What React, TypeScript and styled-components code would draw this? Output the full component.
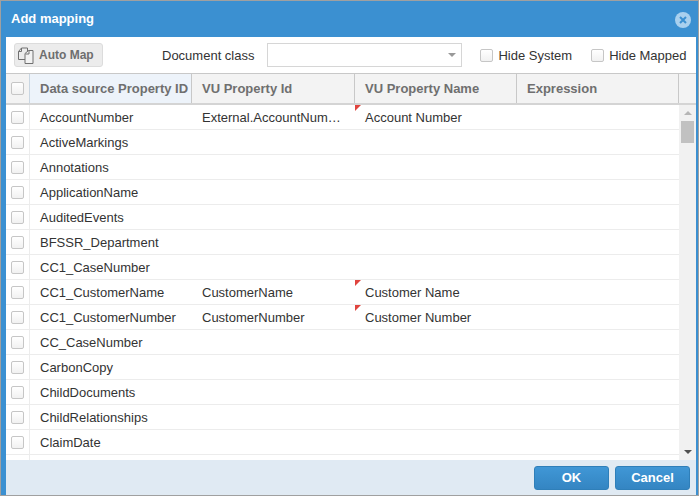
import React from "react";
import styled, { createGlobalStyle } from "styled-components";

const Global = createGlobalStyle`
  html, body { margin: 0; padding: 0; background: #fff; }
  body { font-family: "Liberation Sans", Arial, sans-serif; }
`;

const Dialog = styled.div`
  width: 699px; height: 496px; box-sizing: border-box;
  border: 1px solid #a0a0a0;
  background: #3b90d1; display: flex; flex-direction: column; overflow: hidden;
`;
const TitleBar = styled.div`
  height: 36px; flex: none; display: flex; align-items: center; justify-content: space-between;
  padding: 0 7px 0 10px; color: #fff; font-size: 13px; font-weight: 700;
`;
const TitleText = styled.span`position: relative; top: -1px;`;
const CloseButton = styled.div`
  width: 16px; height: 16px; display: flex; position: relative; top: 1px;
`;
const Body = styled.div`
  flex: 1; min-height: 0; margin: 0 2px 0 5px; background: #fff; display: flex; flex-direction: column;
`;
const Toolbar = styled.div`
  height: 36px; flex: none; box-sizing: border-box; display: flex; align-items: center;
  padding: 0 0 0 8px; color: #333; font-size: 13px;
`;
const AutoMap = styled.div`
  width: 89px; height: 24px; box-sizing: border-box; border: 1px solid #dcdcdc; border-radius: 3px;
  background: #ececec; display: flex; align-items: center; padding-left: 3px; gap: 4px;
  color: #6e6e6e; font-size: 12px; font-weight: 700; margin-right: 59px;
`;
const ClassLabel = styled.span`margin-right: 13px;`;
const Select = styled.div`
  width: 195px; height: 24px; box-sizing: border-box; border: 1px solid #d6d6d6; background: #fff;
  display: flex; align-items: center; justify-content: flex-end; padding-right: 5px; margin-right: 18px;
`;
const Caret = styled.span<{ $up?: boolean; $color?: string }>`
  width: 0; height: 0; border-left: 4px solid transparent; border-right: 4px solid transparent;
  ${p => p.$up
    ? `border-bottom: 4px solid ${p.$color || "#999"};`
    : `border-top: 4px solid ${p.$color || "#999"};`}
`;
const Check = styled.span`
  width: 13px; height: 13px; flex: none; box-sizing: border-box; display: block;
  border: 1px solid #c6c6c6; border-radius: 2px; background: linear-gradient(#fff, #f1f1f1);
`;
const CheckLabel = styled.label<{ $gap: number }>`
  display: flex; align-items: center; gap: 5px; margin-right: ${p => p.$gap}px; white-space: nowrap;
`;
const Header = styled.div`
  height: 32px; flex: none; box-sizing: border-box; display: flex; background: #f3f3f3;
  border-top: 1px solid #c8c8c8; border-bottom: 2px solid #d4d4d4;
`;
const HeadCheck = styled.div`
  width: 24px; box-sizing: border-box; display: flex; align-items: center; justify-content: center;
  border-right: 1px solid #c9d6e2;
`;
const HeadCell = styled.div<{ $w: number; $active?: boolean }>`
  width: ${p => p.$w}px; box-sizing: border-box; border-right: 1px solid #c8c8c8;
  display: flex; align-items: center; padding-left: 10px;
  font-size: 13px; font-weight: 700; color: #6f6f6f; white-space: nowrap; overflow: hidden;
  background: ${p => (p.$active ? "#edf3fa" : "transparent")};
`;
const Content = styled.div`flex: 1; min-height: 0; display: flex; overflow: hidden;`;
const Rows = styled.div`flex: 1; min-width: 0; overflow: hidden;`;
const Row = styled.div`
  height: 25px; box-sizing: border-box; display: flex; border-bottom: 1px solid #ececec;
  font-size: 13px; color: #333;
`;
const RowCheck = styled.div`
  width: 24px; box-sizing: border-box; display: flex; align-items: center; justify-content: center;
  border-right: 1px solid #ececec;
`;
const Cell = styled.div<{ $w: number; $flag?: boolean }>`
  width: ${p => p.$w}px; flex: none; box-sizing: border-box; position: relative;
  padding-left: 10px; line-height: 26px; white-space: nowrap; overflow: hidden;
  &::before {
    content: ""; display: ${p => (p.$flag ? "block" : "none")};
    position: absolute; left: 0; top: 0; width: 6px; height: 6px;
    background: #e0443e; clip-path: polygon(0 0, 100% 0, 0 100%);
  }
`;
const Ellipsis = styled.span`display: block; width: 139px; overflow: hidden; text-overflow: ellipsis;`;
const Scrollbar = styled.div`
  width: 17px; flex: none; background: #f1f1f1; display: flex; flex-direction: column;
  align-items: center;
`;
const ScrollUp = styled.div`height: 16px; display: flex; align-items: center; justify-content: center;`;
const Thumb = styled.div`width: 13px; height: 22px; background: #c1c1c1;`;
const ScrollSpacer = styled.div`flex: 1;`;
const ScrollDown = styled.div`height: 17px; display: flex; align-items: center; justify-content: center;`;
const Footer = styled.div`
  height: 35px; flex: none; background: #e0eaf3; display: flex; align-items: center; justify-content: flex-end;
  gap: 6px; padding-right: 6px;
`;
const Btn = styled.div`
  width: 75px; height: 24px; box-sizing: border-box; border: 1px solid #2f7fb9; border-radius: 3px;
  background: linear-gradient(#4097d6, #3485c2); color: #fff; font-size: 13px; font-weight: 700;
  display: flex; align-items: center; justify-content: center;
`;

const cols = [162, 163, 162, 162];
const data: [string, string?, string?][] = [
  ["AccountNumber", "External.AccountNumber", "Account Number"],
  ["ActiveMarkings"], ["Annotations"], ["ApplicationName"], ["AuditedEvents"],
  ["BFSSR_Department"], ["CC1_CaseNumber"],
  ["CC1_CustomerName", "CustomerName", "Customer Name"],
  ["CC1_CustomerNumber", "CustomerNumber", "Customer Number"],
  ["CC_CaseNumber"], ["CarbonCopy"], ["ChildDocuments"], ["ChildRelationships"], ["ClaimDate"], [""],
];

export default function App() {
  return (
    <>
      <Global />
      <Dialog>
        <TitleBar>
          <TitleText>Add mapping</TitleText>
          <CloseButton>
            <svg width="16" height="16" viewBox="0 0 16 16">
              <circle cx="8" cy="8" r="8" fill="#a9d0ee" />
              <path d="M5 5l6 6M11 5l-6 6" stroke="#3b90d1" strokeWidth="2" />
            </svg>
          </CloseButton>
        </TitleBar>
        <Body>
          <Toolbar>
            <AutoMap>
              <svg width="17" height="17" viewBox="0 0 17 17" fill="none" stroke="#707070" strokeWidth="1">
                <path d="M7.500 12.500h-7v-8l3-3.500h6v4" />
                <path d="M.5 4.500h3v-3.500" />
                <path d="M10.500 3.500h4.500v13h-8v-10z" fill="#f2f2f2" />
                <path d="M7.500 7h3.500v-3.500" />
              </svg>
              Auto Map
            </AutoMap>
            <ClassLabel>Document class</ClassLabel>
            <Select><Caret /></Select>
            <CheckLabel $gap={19}><Check />Hide System</CheckLabel>
            <CheckLabel $gap={0}><Check />Hide Mapped</CheckLabel>
          </Toolbar>
          <Header>
            <HeadCheck><Check /></HeadCheck>
            <HeadCell $w={cols[0]} $active>Data source Property ID</HeadCell>
            <HeadCell $w={cols[1]}>VU Property Id</HeadCell>
            <HeadCell $w={cols[2]}>VU Property Name</HeadCell>
            <HeadCell $w={cols[3]}>Expression</HeadCell>
          </Header>
          <Content>
            <Rows>
              {data.map((r, i) => (
                <Row key={i}>
                  <RowCheck>{r[0] ? <Check /> : null}</RowCheck>
                  <Cell $w={cols[0]}>{r[0]}</Cell>
                  <Cell $w={cols[1]}><Ellipsis>{r[1]}</Ellipsis></Cell>
                  <Cell $w={cols[2]} $flag={!!r[2]}>{r[2]}</Cell>
                  <Cell $w={cols[3]} />
                </Row>
              ))}
            </Rows>
            <Scrollbar>
              <ScrollUp><Caret $up $color="#b5b5b5" /></ScrollUp>
              <Thumb />
              <ScrollSpacer />
              <ScrollDown><Caret $color="#505050" /></ScrollDown>
            </Scrollbar>
          </Content>
          <Footer>
            <Btn>OK</Btn>
            <Btn>Cancel</Btn>
          </Footer>
        </Body>
      </Dialog>
    </>
  );
}
